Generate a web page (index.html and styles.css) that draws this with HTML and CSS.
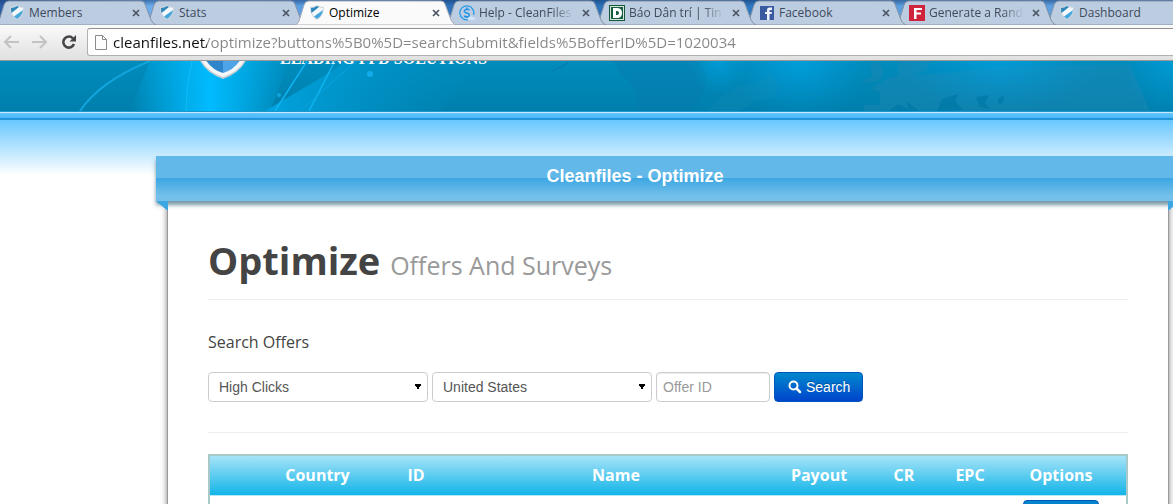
FILE: index.html
```html
<!DOCTYPE html>
<html lang="en">
<head>
  <meta charset="UTF-8">
  <meta name="viewport" content="width=device-width, initial-scale=1.0">
  <title>Optimize</title>
  <link rel="stylesheet" href="styles.css">
</head>
<body>
  <svg class="defs" aria-hidden="true">
    <symbol id="shield" viewBox="0 0 14 15">
      <path d="M0 2Q4 2 7 0Q10 2 14 2Q14 11 7 15Q0 11 0 2Z" fill="#cdd6dc"/>
      <path d="M1 3Q4 3 7 1Q10 3 13 3Q13 10 7 14Q1 10 1 3Z" fill="#f6f9fb"/>
      <path d="M1 3Q4 3 7 1L9 2L1.500 8Q1 6 1 3Z" fill="#2f86b8"/>
      <path d="M13 5Q12 11 7 14L4 11.500Z" fill="#45a6dc"/>
    </symbol>
    <symbol id="tab-shape" viewBox="0 0 162 25">
      <path d="M0 25Q3 24 4 21L9 5Q10 1 14 1H146Q149 1 150 4L156 20Q158 24 161 25Z"/>
    </symbol>
    <symbol id="close" viewBox="0 0 8 8">
      <path d="M1 1L7 7M7 1L1 7" fill="none" stroke="#4c5563" stroke-width="1.7"/>
    </symbol>
  </svg>

  <div class="browser">
    <nav class="tabs">
      <div class="tab">
        <svg class="tab-bg"><use href="#tab-shape"/></svg>
        <svg class="favicon"><use href="#shield"/></svg>
        <a href="#">Members</a>
        <button type="button" aria-label="Close tab"><svg><use href="#close"/></svg></button>
      </div>
      <div class="tab">
        <svg class="tab-bg"><use href="#tab-shape"/></svg>
        <svg class="favicon"><use href="#shield"/></svg>
        <a href="#">Stats</a>
        <button type="button" aria-label="Close tab"><svg><use href="#close"/></svg></button>
      </div>
      <div class="tab active">
        <svg class="tab-bg"><use href="#tab-shape"/></svg>
        <svg class="favicon"><use href="#shield"/></svg>
        <a href="#">Optimize</a>
        <button type="button" aria-label="Close tab"><svg><use href="#close"/></svg></button>
      </div>
      <div class="tab">
        <svg class="tab-bg"><use href="#tab-shape"/></svg>
        <svg class="favicon wide" viewBox="0 0 16 16">
          <path d="M10 14.500A7 7 0 1 1 14.500 10" fill="none" stroke="#2a9ae6" stroke-width="1.300"/>
          <path d="M10.500 5Q8 3.500 6 5T7.500 8Q11 8.500 10 11Q8 12.500 5 11M8 2.500V5M8 11V13" fill="none" stroke="#1c93e8" stroke-width="1.500"/>
          <path d="M9 15V13L12 11L16 13V15Z" fill="#cfe4f6"/>
        </svg>
        <a href="#" class="fade">Help - CleanFiles Help</a>
        <button type="button" aria-label="Close tab"><svg><use href="#close"/></svg></button>
      </div>
      <div class="tab">
        <svg class="tab-bg"><use href="#tab-shape"/></svg>
        <svg class="favicon wide" viewBox="0 0 16 16">
          <rect width="16" height="16" fill="#14573a"/>
          <rect x="1" y="1" width="14" height="14" fill="#d5e5dc"/>
          <rect x="2" y="2" width="12" height="12" fill="#156040"/>
          <path d="M4 3H8Q13 3 13 8T8 13H4ZM7 6V10H8Q10 10 10 8T8 6Z" fill="#fff" fill-rule="evenodd"/>
        </svg>
        <a href="#" class="fade">Báo Dân trí | Tin tức</a>
        <button type="button" aria-label="Close tab"><svg><use href="#close"/></svg></button>
      </div>
      <div class="tab">
        <svg class="tab-bg"><use href="#tab-shape"/></svg>
        <svg class="favicon wide" viewBox="0 0 16 16">
          <rect x="1" y="1" width="14" height="14" fill="#3a5aa0"/>
          <path d="M8 15V9H6V7H8V5Q8 2.500 10.500 2.500H13V5H11.500Q10.500 5 10.500 6V7H13L12.500 9H10.500V15Z" fill="#eef2fa"/>
        </svg>
        <a href="#">Facebook</a>
        <button type="button" aria-label="Close tab"><svg><use href="#close"/></svg></button>
      </div>
      <div class="tab">
        <svg class="tab-bg"><use href="#tab-shape"/></svg>
        <svg class="favicon wide" viewBox="0 0 16 16">
          <rect width="16" height="16" fill="#d0243c"/>
          <path d="M5 3H13V5H7.500V7.500H12V9.500H7.500V14H5Z" fill="#fff"/>
        </svg>
        <a href="#" class="fade">Generate a Random</a>
        <button type="button" aria-label="Close tab"><svg><use href="#close"/></svg></button>
      </div>
      <div class="tab">
        <svg class="tab-bg"><use href="#tab-shape"/></svg>
        <svg class="favicon"><use href="#shield"/></svg>
        <a href="#">Dashboard</a>
      </div>
    </nav>

    <div class="toolbar">
      <button type="button" aria-label="Back">
        <svg viewBox="0 0 16 14"><path d="M8 1L2 7L8 13M2 7H16" fill="none" stroke="#c3c3c3" stroke-width="2"/></svg>
      </button>
      <button type="button" aria-label="Forward">
        <svg viewBox="0 0 16 14"><path d="M8 1L14 7L8 13M14 7H0" fill="none" stroke="#c3c3c3" stroke-width="2"/></svg>
      </button>
      <button type="button" aria-label="Reload">
        <svg viewBox="0 0 16 14"><path d="M12 3.500A5.500 5.500 0 1 0 13 9" fill="none" stroke="#454545" stroke-width="2.500"/><path d="M15 0V6.500H8.500Z" fill="#454545"/></svg>
      </button>
      <div class="omnibox">
        <svg viewBox="0 0 12 15"><path d="M.5.5H7.500L11.500 4.500V14.500H.5ZM7.500.5V4.500H11.500" fill="#fdfdfd" stroke="#8b8b8b"/></svg>
        <input type="text" aria-label="Address" value="cleanfiles.net/optimize?buttons%5B0%5D=searchSubmit&amp;fields%5BofferID%5D=1020034">
      </div>
    </div>

    <div class="viewport">
      <header class="banner">
        <svg class="banner-art" viewBox="0 0 1173 50" preserveAspectRatio="xMinYMin slice" aria-hidden="true">
          <defs>
            <linearGradient id="beam">
              <stop offset="0" stop-color="#00b8fa" stop-opacity="0"/>
              <stop offset="0.350" stop-color="#00b4f4" stop-opacity="0.850"/>
              <stop offset="0.500" stop-color="#00bbff"/>
              <stop offset="0.650" stop-color="#00b4f4" stop-opacity="0.850"/>
              <stop offset="1" stop-color="#00b8fa" stop-opacity="0"/>
            </linearGradient>
            <radialGradient id="glow">
              <stop offset="0" stop-color="#00aaf0"/>
              <stop offset="1" stop-color="#00a0e0" stop-opacity="0"/>
            </radialGradient>
            <linearGradient id="haze">
              <stop offset="0" stop-color="#00a4e0"/>
              <stop offset="1" stop-color="#0090c4" stop-opacity="0"/>
            </linearGradient>
          </defs>
          <path d="M150 0H290L270 50H130Z" fill="url(#beam)"/>
          <path d="M265 50L334 9L345 0H480L440 50Z" fill="url(#haze)"/>
          <path d="M80 50Q100 20 150 0" fill="none" stroke="#12a4dc" stroke-width="2"/>
          <path d="M186 50Q186 25 192 0" fill="none" stroke="#1ac4ff" opacity="0.600"/>
          <path d="M275 50L307 0M309 50L335 0" stroke="#0fb4f2" stroke-width="1.500"/>
          <path d="M300 50L356 0" stroke="#0ba4de"/>
          <circle cx="370" cy="13" r="3" fill="#12acea"/>
          <circle cx="279" cy="34" r="2" fill="#10a4dc"/>
          <!-- North America -->
          <path d="M613 0L619 12L627 18L636 30L638 50H690Q715 25 700 0Z" fill="#0a78ac" opacity="0.350"/>
          <path d="M553 10L562 5L568 2" fill="none" stroke="#0a78a4"/>
          <ellipse cx="719" cy="0" rx="30" ry="34" fill="url(#glow)" opacity="0.500"/>
          <ellipse cx="800" cy="0" rx="70" ry="60" fill="url(#glow)" opacity="0.600"/>
          <path d="M720 36L739 25L756 22L771 14L780 27L774 36L756 40L740 50H708Z" fill="#1c8fc0" opacity="0.200"/>
          <!-- Europe -->
          <path d="M862 20L872 16L870 4L878 0L884 10L880 20L865 22ZM864 50V44H880V32L871 27L887 18L898 14V0H931L926 10L914 14L948 12L1010 4H1130L1150 50Z" fill="#2387b2" opacity="0.400"/>
          <ellipse cx="1000" cy="0" rx="100" ry="50" fill="url(#glow)" opacity="0.500"/>
          <path d="M937 50L942 38L958 33L955 40L963 49L950 50ZM976 36L989 34L985 42L990 48L980 46ZM998 38L1004 34L1003 42L998 43ZM889 50L898 43L912 50ZM906 40L919 50H910Z" fill="#0079a8" opacity="0.800"/>
          <ellipse cx="1173" cy="0" rx="50" ry="60" fill="url(#glow)" opacity="0.500"/>
        </svg>
        <div class="brand">
          <svg viewBox="0 0 50 40" aria-hidden="true">
            <path d="M1 0H49V20Q42 34 25 40Q8 34 1 20Z" fill="#c8ced2"/>
            <path d="M2 0H48V19Q41 33 25 38Q9 33 2 19Z" fill="#f4f6f7"/>
            <path d="M7 0H25V34Q14 31 7 20Z" fill="#2f85cc"/>
            <path d="M43 0H25V34Q36 31 43 20Z" fill="#4da4e6"/>
            <path d="M7 22L12 18L25 0H7Z" fill="#fff"/>
          </svg>
          <span class="tagline">Leading PPD Solutions</span>
        </div>
      </header>
      <div class="stripe"></div>

      <main class="page">
        <div class="ribbon">Cleanfiles - Optimize</div>
        <div class="panel">
          <div class="page-header">
            <h1>Optimize <small>Offers And Surveys</small></h1>
          </div>

          <form class="search">
            <h2>Search Offers</h2>
            <div class="fields">
              <select aria-label="Sort by">
                <option>High Clicks</option>
              </select>
              <select aria-label="Country">
                <option>United States</option>
              </select>
              <input type="text" aria-label="Offer ID" placeholder="Offer ID">
              <button type="submit">
                <svg viewBox="0 0 14 14"><circle cx="5.500" cy="5.500" r="4" fill="none" stroke="#fff" stroke-width="2"/><path d="M8.500 8.500L12 12" stroke="#fff" stroke-width="2.500" stroke-linecap="round"/></svg>
                Search
              </button>
            </div>
          </form>

          <table class="offers">
            <thead>
              <tr>
                <th class="col-flag"></th>
                <th class="col-country">Country</th>
                <th class="col-id">ID</th>
                <th>Name</th>
                <th class="col-payout">Payout</th>
                <th class="col-cr">CR</th>
                <th class="col-epc">EPC</th>
                <th class="col-options">Options</th>
              </tr>
            </thead>
            <tbody>
              <tr>
                <td colspan="7"></td>
                <td><button type="button" aria-label="Options"></button></td>
              </tr>
            </tbody>
          </table>
        </div>
      </main>
    </div>
  </div>
</body>
</html>
```
FILE: styles.css
```css
* {
  box-sizing: border-box;
}

body {
  margin: 0;
  font-family: "Open Sans", "Noto Sans", sans-serif;
  color: #444;
  background-color: #fff;
}

button {
  padding: 0;
  border: none;
  background: none;
  cursor: pointer;
}

svg {
  display: block;
  flex-shrink: 0;
}

.defs {
  position: absolute;
  width: 0;
  height: 0;
}

.browser {
  display: flex;
  flex-direction: column;
  height: 100vh;
  overflow: hidden;
}

/* Tab strip */
.tabs {
  display: flex;
  height: 25px;
  overflow: hidden;
  background: linear-gradient(rgba(20, 50, 100, 0.5), transparent 6px), linear-gradient(to right, #2c5ea8, #6aaef0 150px, #5a9ee4 300px, #2c70b8 460px, #2f78c2 760px, #5b9fe0 900px, #5b9fe0);
}

.tab {
  position: relative;
  display: flex;
  flex: 0 0 150px;
  align-items: center;
  gap: 5px;
  min-width: 0;
  padding: 0 10px;
  font-size: 12px;
}

.tab:nth-child(1) { z-index: 8; }
.tab:nth-child(2) { z-index: 7; }
.tab:nth-child(3) { z-index: 9; }
.tab:nth-child(4) { z-index: 5; }
.tab:nth-child(5) { z-index: 4; }
.tab:nth-child(6) { z-index: 3; }
.tab:nth-child(7) { z-index: 2; }
.tab:nth-child(8) { z-index: 1; }

.tab-bg {
  position: absolute;
  top: 0;
  left: -5px;
  z-index: -1;
  width: 162px;
  height: 25px;
  fill: #bccde2;
  stroke: #8592a5;
}

.active .tab-bg {
  fill: #fafafa;
  stroke: #a4abb5;
}

.favicon {
  width: 14px;
  height: 15px;
}

.favicon.wide {
  width: 16px;
  height: 16px;
  margin-left: -1px;
  margin-right: -1px;
}

.tab a {
  flex: 1;
  min-width: 0;
  overflow: hidden;
  white-space: nowrap;
  color: #3f4a5a;
  text-decoration: none;
}

.tab.active a {
  color: #000;
}

.tab a.fade {
  -webkit-mask-image: linear-gradient(to right, #000 75%, transparent 97%);
  mask-image: linear-gradient(to right, #000 75%, transparent 97%);
}

.tab button svg {
  width: 8px;
  height: 8px;
}

/* Toolbar */
.toolbar {
  display: flex;
  align-items: center;
  gap: 13px;
  height: 36px;
  padding: 0 0 1px 3px;
  border-bottom: 1px solid #999;
  background: linear-gradient(#fafafa, #e0e0e0);
}

.toolbar button svg {
  width: 16px;
  height: 14px;
}

.omnibox {
  display: flex;
  flex: 1;
  align-items: center;
  gap: 4px;
  height: 28px;
  margin-left: -3px;
  margin-right: -4px;
  padding-left: 7px;
  border: 1px solid #b0b0b0;
  border-top-color: #909090;
  border-radius: 3px;
  background-color: #fff;
}

.omnibox svg {
  width: 12px;
  height: 15px;
}

/* Host is dark, the rest of the address is grey */
.omnibox input {
  flex: 1;
  min-width: 0;
  padding: 0 2px;
  border: none;
  outline: none;
  font: 15px/24px "Open Sans", sans-serif;
  color: transparent;
  background: linear-gradient(to right, #111 96px, #868686 96px);
  -webkit-background-clip: text;
  background-clip: text;
}

/* Site */
.viewport {
  flex: 1;
  overflow: hidden;
  background: linear-gradient(#66c6ff 58px, #fff 114px);
}

.banner {
  position: relative;
  height: 50px;
  overflow: hidden;
  background: linear-gradient(#008cbd, #007fac);
}

.banner-art {
  position: absolute;
  top: 0;
  left: 0;
  width: 100%;
  height: 50px;
}

.brand {
  position: relative;
  display: flex;
  gap: 32px;
  margin-top: -22px;
  padding-left: 198px;
}

.brand svg {
  width: 50px;
  height: 40px;
}

.tagline {
  padding-top: 8px;
  font: bold 16px/24px "Liberation Serif", serif;
  text-transform: uppercase;
  color: #fff;
}

.stripe {
  height: 9px;
  border-top: 1px solid #1d98cf;
  border-bottom: 2px solid #2195d6;
  background: linear-gradient(#c4eaff 1px, #63c5ff 1px, #48b8fa);
}

.page {
  margin: 36px -7px 0 156px;
}

.ribbon {
  position: relative;
  height: 45px;
  padding-right: 66px;
  font: bold 18px/40px "Liberation Sans", sans-serif;
  text-align: center;
  color: #fff;
  background: linear-gradient(#62b8e8 22px, #3ba6e2 22px, #74c0ea 40px, #74c0ea);
  box-shadow: 0 4px 4px rgba(50, 95, 115, 0.65);
}

/* Folded ribbon ends */
.ribbon::before,
.ribbon::after {
  content: "";
  position: absolute;
  top: 45px;
  width: 12px;
  height: 10px;
  background-color: #3ba6e2;
}

.ribbon::before {
  left: 0;
  clip-path: polygon(0 0, 100% 0, 100% 100%);
}

.ribbon::after {
  right: 0;
  clip-path: polygon(0 0, 100% 0, 0 100%);
}

.panel {
  margin: 0 12px;
  padding: 31px 40px 40px;
  background-color: #fff;
  box-shadow: 0 0 0 1px #999, 0 0 6px 1px rgba(0, 0, 0, 0.5);
}

.page-header {
  height: 68px;
  border-bottom: 1px solid #eee;
}

h1 {
  margin: 0;
  font-size: 38px;
  line-height: 56px;
  color: #444;
}

h1 small {
  font-size: 25px;
  font-weight: normal;
  color: #999;
}

.search {
  padding: 30px 0;
  border-bottom: 1px solid #eee;
}

.search h2 {
  margin: 0 0 18px;
  font-size: 16px;
  font-weight: normal;
  line-height: 24px;
}

.fields {
  display: flex;
  gap: 4px;
}

.fields select,
.fields input,
.fields button {
  height: 30px;
  border-radius: 4px;
  font: 14px/20px "Liberation Sans", Arial, sans-serif;
}

.fields select,
.fields input {
  border: 1px solid #ccc;
  color: #555;
  background-color: #fff;
}

.fields select {
  width: 220px;
  padding: 0 10px;
  appearance: none;
  background-image: conic-gradient(from -30deg at 50% 100%, #000 60deg, transparent 60deg);
  background-repeat: no-repeat;
  background-size: 6px 6px;
  background-position: right 6px center;
}

.fields input {
  width: 114px;
  padding: 4px 6px;
  box-shadow: inset 0 1px 1px rgba(0, 0, 0, 0.08);
}

.fields input::placeholder {
  color: #999;
}

.fields button {
  display: flex;
  align-items: center;
  gap: 4px;
  padding: 0 12px 0 13px;
  border: 1px solid #0055bb;
  color: #fff;
  text-shadow: 0 -1px 0 rgba(0, 0, 0, 0.25);
  background: linear-gradient(#0088cc, #0044cc);
}

.fields button svg {
  width: 14px;
  height: 14px;
}

.offers {
  width: 100%;
  margin-top: 21px;
  border: 2px solid #a9c9c9;
  border-spacing: 0;
  table-layout: fixed;
}

.offers th {
  height: 40px;
  padding: 0 0 2px;
  border-bottom: 1px solid #b5e8f8;
  font-size: 16px;
  line-height: 22px;
  color: #fff;
  background: linear-gradient(#a6e4f8, #12b4e8);
}

.col-flag { width: 51px; }
.col-country { width: 113px; }
.col-id { width: 84px; }
.col-payout { width: 90px; }
.col-cr { width: 80px; }
.col-epc { width: 52px; }
.col-options { width: 130px; }

.offers td {
  padding: 4px 0;
  text-align: center;
}

.offers td button {
  width: 76px;
  height: 30px;
  border: 1px solid #0055bb;
  border-radius: 4px;
  background: linear-gradient(#0088cc, #0044cc);
}
```
